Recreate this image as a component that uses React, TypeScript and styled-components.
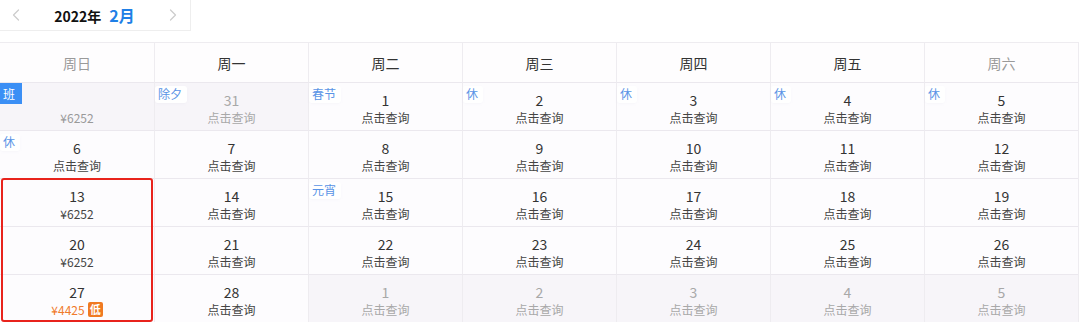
import React from "react";
import styled, { createGlobalStyle } from "styled-components";
import { ChevronLeft, ChevronRight } from "lucide-react";

const GlobalStyle = createGlobalStyle`
  body {
    margin: 0;
    background: #ffffff;
    font-family: "Noto Sans CJK SC", "Noto Sans", sans-serif;
  }
`;

type Tag = { text: string; solid?: boolean };
type Day = {
  num: string;
  sub: string;
  outside?: boolean;
  tag?: Tag;
  price?: "normal" | "low" | "muted";
};

const weekNames = ["周日", "周一", "周二", "周三", "周四", "周五", "周六"];
const q = "点击查询";

const days: Day[] = [
  { num: "", sub: "¥6252", outside: true, price: "muted", tag: { text: "班", solid: true } },
  { num: "31", sub: q, outside: true, tag: { text: "除夕" } },
  { num: "1", sub: q, tag: { text: "春节" } },
  { num: "2", sub: q, tag: { text: "休" } },
  { num: "3", sub: q, tag: { text: "休" } },
  { num: "4", sub: q, tag: { text: "休" } },
  { num: "5", sub: q, tag: { text: "休" } },
  { num: "6", sub: q, tag: { text: "休" } },
  ...["7", "8", "9", "10", "11", "12"].map((n) => ({ num: n, sub: q })),
  { num: "13", sub: "¥6252", price: "normal" },
  { num: "14", sub: q },
  { num: "15", sub: q, tag: { text: "元宵" } },
  ...["16", "17", "18", "19"].map((n) => ({ num: n, sub: q })),
  { num: "20", sub: "¥6252", price: "normal" },
  ...["21", "22", "23", "24", "25", "26"].map((n) => ({ num: n, sub: q })),
  { num: "27", sub: "¥4425", price: "low" },
  { num: "28", sub: q },
  ...["1", "2", "3", "4", "5"].map((n) => ({ num: n, sub: q, outside: true })),
];

const App = () => {
  return (
    <Page>
      <GlobalStyle />
      <MonthNav>
        <ChevronLeft size={20} strokeWidth={1.5} color="#cdcdcd" />
        <Title>
          2022年<Month>2月</Month>
        </Title>
        <ChevronRight size={20} strokeWidth={1.5} color="#cdcdcd" />
      </MonthNav>
      <Grid>
        {weekNames.map((w, i) => (
          <WeekCell key={w} $weekend={i === 0 || i === 6}>
            {w}
          </WeekCell>
        ))}
        {days.map((d, i) => (
          <DayCell
            key={i}
            $outside={!!d.outside}
            $row={Math.floor(i / 7) + 2}
            $col={(i % 7) + 1}
          >
            {d.tag && <DayTag $solid={!!d.tag.solid}>{d.tag.text}</DayTag>}
            <DayNum $outside={!!d.outside}>{d.num}</DayNum>
            <DaySub $outside={!!d.outside} $price={d.price}>
              {d.sub}
              {d.price === "low" && <LowBadge>低</LowBadge>}
            </DaySub>
          </DayCell>
        ))}
        <Highlight />
      </Grid>
    </Page>
  );
};

export default App;

const Page = styled.div`
  width: 1080px;
  height: 325px;
  overflow: hidden;
  display: flex;
  flex-direction: column;
`;

const MonthNav = styled.div`
  flex-shrink: 0;
  width: 191px;
  height: 31px;
  box-sizing: border-box;
  border-right: 1px solid #eeeeee;
  border-bottom: 1px solid #eeeeee;
  display: flex;
  align-items: center;
  justify-content: space-between;
  padding: 0 7px 0 6px;
`;

const Title = styled.div`
  font-size: 14px;
  font-weight: 700;
  color: #111111;
  display: flex;
  align-items: baseline;
  gap: 8px;
`;

const Month = styled.span`
  font-size: 16px;
  color: #1f7fe6;
`;

const Grid = styled.div`
  flex-shrink: 0;
  margin-top: 11px;
  display: grid;
  grid-template-columns: repeat(7, 1fr);
  grid-template-rows: 39px repeat(5, 48px);
  width: 1078px;
  border-top: 1px solid #eeecf0;
  border-right: 1px solid #eeecf0;
  background: #fdfcfe;
`;

const WeekCell = styled.div<{ $weekend: boolean }>`
  display: flex;
  align-items: center;
  justify-content: center;
  font-size: 14px;
  color: ${(p) => (p.$weekend ? "#9a9a9a" : "#333333")};
  border-left: 1px solid #eeecf0;
  background: #fefdfe;
  &:first-child {
    border-left: none;
  }
`;

const DayCell = styled.div<{ $outside: boolean; $row: number; $col: number }>`
  grid-row: ${(p) => p.$row};
  grid-column: ${(p) => p.$col};
  position: relative;
  box-sizing: border-box;
  border-top: 1px solid #ebe8ee;
  border-left: ${(p) => (p.$col === 1 ? "none" : "1px solid #eeecf0")};
  background: ${(p) => (p.$outside ? "#f7f5f9" : "#fdfcfe")};
  display: flex;
  flex-direction: column;
  align-items: center;
  padding-top: 8px;
`;

const DayNum = styled.div<{ $outside: boolean }>`
  height: 18px;
  line-height: 18px;
  font-size: 14px;
  color: ${(p) => (p.$outside ? "#a8a8a8" : "#333333")};
`;

const DaySub = styled.div<{ $outside: boolean; $price?: string }>`
  display: flex;
  align-items: center;
  gap: 3px;
  height: 17px;
  line-height: 17px;
  font-size: 12px;
  color: ${(p) =>
    p.$price === "low"
      ? "#f07a2c"
      : p.$price === "muted"
      ? "#999999"
      : p.$outside
      ? "#a8a8a8"
      : "#444444"};
`;

const LowBadge = styled.span`
  display: inline-flex;
  align-items: center;
  justify-content: center;
  width: 15px;
  height: 15px;
  border-radius: 2px;
  background: #f07a22;
  color: #ffffff;
  font-size: 11px;
  font-weight: 700;
`;

const DayTag = styled.span<{ $solid: boolean }>`
  position: absolute;
  top: ${(p) => (p.$solid ? "0" : "3px")};
  left: 0;
  padding: ${(p) => (p.$solid ? "3px 7px 3px 3px" : "0 5px 2px 3px")};
  font-size: 12px;
  line-height: 15px;
  color: ${(p) => (p.$solid ? "#ffffff" : "#5a94e6")};
  background: ${(p) => (p.$solid ? "#3b8ff5" : "#ffffff")};
  box-shadow: ${(p) => (p.$solid ? "none" : "0 1px 3px rgba(140, 140, 170, 0.05)")};
  border-radius: ${(p) => (p.$solid ? "0" : "3px")};
`;

const Highlight = styled.div`
  grid-column: 1;
  grid-row: 4 / 7;
  z-index: 1;
  margin: 0 1px 0 1px;
  border: 2px solid #e8231c;
  border-radius: 3px;
  pointer-events: none;
`;
